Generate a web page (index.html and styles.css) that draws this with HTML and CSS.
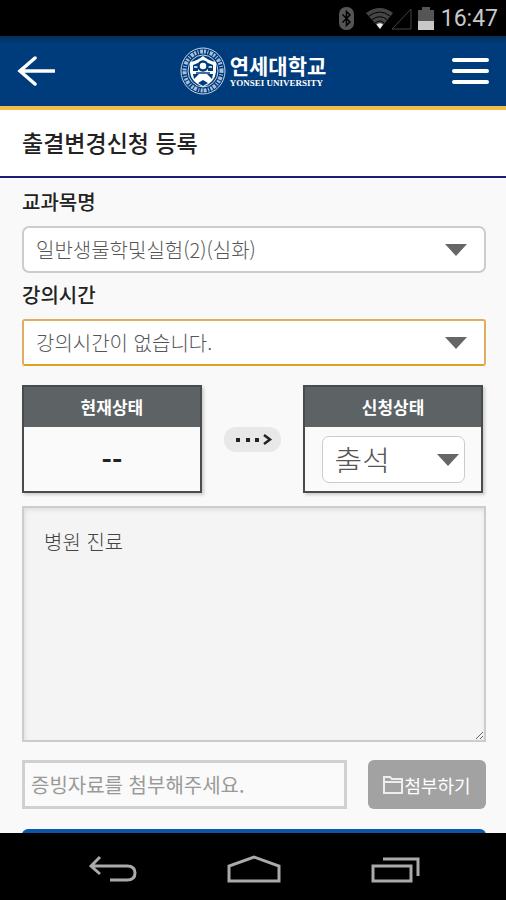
FILE: index.html
```html
<!DOCTYPE html>
<html lang="ko">
<head>
    <meta charset="UTF-8">
    <meta name="viewport" content="width=device-width, initial-scale=1">
    <title>출결변경신청 등록</title>
    <link rel="stylesheet" href="styles.css">
</head>
<body>
<div class="phone">
    <div class="status-bar">
        <svg class="status-icons" width="96" height="24" viewBox="0 0 96 24">
            <rect x="0" y="0" width="15" height="23" rx="7" fill="#555"/>
            <path d="M3.500 7.500L11 15L7.500 18.500V4.500L11 8L3.500 15.500" fill="none" stroke="#000" stroke-width="1.500"/>
            <path d="M27 6Q41-4 54 6L41 22Z" fill="#454545"/>
            <path d="M30 9Q41 1 51 9M33 12.500Q41 7 48 12.500M36 16Q41 12 45 16" fill="none" stroke="#000" stroke-width="1"/>
            <path d="M37.500 17.500Q41 15 44 17.500L41 22Z" fill="#eee"/>
            <path d="M72 2V22H53Z" fill="none" stroke="#444" stroke-width="1"/>
            <path d="M79 3H83V0H91V3H95V14H79Z" fill="#555"/>
            <path d="M79 14H95V23H79Z" fill="#c8c8c8"/>
        </svg>
        <span class="clock">16:47</span>
    </div>

    <header class="header">
        <button class="icon-btn" type="button" aria-label="뒤로">
            <svg width="38" height="30" viewBox="0 0 38 30" fill="none" stroke="#fff" stroke-width="3.500" stroke-linecap="round">
                <path d="M3 15H37M18 2L3 15L18 28"/>
            </svg>
        </button>
        <a class="logo" href="#">
            <svg width="46" height="48" viewBox="0 0 46 48">
                <ellipse cx="23" cy="24" rx="22" ry="23" fill="none" stroke="#c5d5e8" stroke-width="1"/>
                <ellipse cx="23" cy="24" rx="18.500" ry="19.500" fill="none" stroke="#a9c0dc" stroke-width="4" stroke-dasharray="2 1.500 1 1.500 3 1"/>
                <ellipse cx="23" cy="24" rx="15" ry="16" fill="#003c7c" stroke="#c5d5e8" stroke-width="1"/>
                <path d="M10 15Q17 14 23 9Q29 14 36 15V25Q35 35 23 40Q11 35 10 25Z" fill="#fff"/>
                <path d="M13 18L18 16V24H13ZM33 18L28 16V24H33ZM13 27H19L14 32ZM33 27H27L32 32ZM23 33L28 36L23 39L18 36Z" fill="#003c7c"/>
                <path d="M14 20H18M28 20H32" stroke="#fff" stroke-width="1.500"/>
                <circle cx="23" cy="19" r="4.500" fill="#fff" stroke="#003c7c" stroke-width="2.500"/>
                <path d="M16 26H30" stroke="#003c7c" stroke-width="1.500"/>
            </svg>
            <span class="logo-text">
                <strong class="logo-ko">연세대학교</strong>
                <span class="logo-en">YONSEI UNIVERSITY</span>
            </span>
        </a>
        <button class="icon-btn" type="button" aria-label="메뉴">
            <svg width="38" height="30" viewBox="0 0 38 30" stroke="#fff" stroke-width="4" stroke-linecap="round">
                <path d="M3 4H36M3 15H36M3 26H36"/>
            </svg>
        </button>
    </header>

    <h1 class="page-title">출결변경신청 등록</h1>

    <main class="content">
        <form class="form">
            <label class="label" for="subject">교과목명</label>
            <div class="select-box">
                <select class="select" id="subject">
                    <option>일반생물학및실험(2)(심화)</option>
                </select>
                <svg class="arrow" width="22" height="12" viewBox="0 0 22 12"><path d="M0 0H22L11 12Z" fill="#666"/></svg>
            </div>

            <label class="label" for="time">강의시간</label>
            <div class="select-box">
                <select class="select active" id="time">
                    <option>강의시간이 없습니다.</option>
                </select>
                <svg class="arrow" width="22" height="12" viewBox="0 0 22 12"><path d="M0 0H22L11 12Z" fill="#666"/></svg>
            </div>

            <div class="state">
                <section class="card">
                    <h2 class="card-title">현재상태</h2>
                    <div class="card-body"><strong class="current">--</strong></div>
                </section>
                <svg class="state-arrow" width="57" height="25" viewBox="0 0 57 25">
                    <rect width="57" height="25" rx="12" fill="#e8e8e8"/>
                    <path d="M12 11H16V15H12ZM22 11H26V15H22ZM31 11H35V15H31Z" fill="#222"/>
                    <path d="M40 8L46 12.500L40 17" fill="none" stroke="#222" stroke-width="2.500"/>
                </svg>
                <section class="card">
                    <h2 class="card-title"><label for="request">신청상태</label></h2>
                    <div class="card-body">
                        <div class="select-box small">
                            <select class="select" id="request">
                                <option>출석</option>
                            </select>
                            <svg class="arrow" width="22" height="12" viewBox="0 0 22 12"><path d="M0 0H22L11 12Z" fill="#666"/></svg>
                        </div>
                    </div>
                </section>
            </div>

            <textarea class="reason" aria-label="사유">병원 진료</textarea>

            <div class="attach">
                <input class="file-name" type="text" placeholder="증빙자료를 첨부해주세요." aria-label="증빙자료">
                <button class="file-btn" type="button">
                    <svg width="20" height="18" viewBox="0 0 20 18" fill="none" stroke="#eee" stroke-width="2">
                        <path d="M1 17V1H7L9 3H19V17ZM1 6H19"/>
                    </svg>
                    <span>첨부하기</span>
                </button>
            </div>

            <button class="submit" type="submit" aria-label="등록"></button>
        </form>
    </main>

    <nav class="nav-bar">
        <button class="icon-btn" type="button" aria-label="이전">
            <svg width="48" height="28" viewBox="0 0 48 28" fill="none" stroke="#aaa" stroke-width="3">
                <path d="M2 11H38Q46 11 46 18Q46 25 38 25H21M11 2L2 11L11 19"/>
            </svg>
        </button>
        <button class="icon-btn" type="button" aria-label="홈">
            <svg width="54" height="28" viewBox="0 0 54 28" fill="none" stroke="#aaa" stroke-width="3">
                <path d="M2 26V11L27 2L52 11V26Z"/>
            </svg>
        </button>
        <button class="icon-btn" type="button" aria-label="최근 앱">
            <svg width="50" height="28" viewBox="0 0 50 28" fill="none" stroke="#aaa" stroke-width="3">
                <path d="M2 11H40V26H2ZM12 4H47V21"/>
            </svg>
        </button>
    </nav>
</div>
</body>
</html>
```
FILE: styles.css
```css
*{box-sizing:border-box;}
body,h1,h2{margin:0;padding:0;}
body{background:#000;color:#222;font:400 20px/28px "Noto Sans CJK KR",sans-serif;}
button,input,select,textarea{margin:0;font:inherit;outline:none;}
svg{display:block;flex:none;}
.phone{display:flex;flex-direction:column;height:100vh;}

/* status bar */
.status-bar{display:flex;flex:none;align-items:center;justify-content:flex-end;gap:6px;height:36px;padding:2px 8px 0;background:#000;}
.clock{color:#c8c8c8;font:400 23px/34px Roboto,sans-serif;}

/* header */
.header{display:flex;flex:none;align-items:center;justify-content:space-between;height:74px;padding:0 17px;background:linear-gradient(#08305c,#003c7c 8px);border-bottom:4px solid #f3bd4b;}
.icon-btn{padding:0;background:none;border:0;}
.logo{display:flex;align-items:center;gap:4px;color:#fff;text-decoration:none;}
.logo-text{display:flex;flex-direction:column;}
.logo-ko{font-size:21px;line-height:24px;font-weight:700;}
.logo-en{font:700 9px/12px "Liberation Serif",serif;white-space:nowrap;}
.page-title{flex:none;height:68px;padding:0 22px;background:#fff;border-bottom:2px solid #1c1c78;font-size:23px;line-height:64px;font-weight:500;}

/* form */
.content{flex:1;min-height:0;overflow:hidden;background:#f9f9f9;}
.form{display:flex;flex-direction:column;padding:10px 20px 0 22px;}
.label{margin-bottom:10px;font-weight:500;}
.select-box{position:relative;margin-bottom:8px;}
.select{display:block;width:100%;height:47px;padding:0 40px 0 12px;background:#fff;border:2px solid #ccc;border-radius:7px;color:#555;font-weight:300;appearance:none;}
.select.active{border-color:#e0ae60;border-bottom-color:#e0a020;border-radius:3px;}
.arrow{position:absolute;top:18px;right:19px;pointer-events:none;}
.state{display:flex;align-items:center;justify-content:space-between;margin:11px 3px 13px 0;}
.card{width:39%;border:2px solid #484c4f;box-shadow:2px 2px 3px #ccc;}
.card-title{background:#5d6265;color:#fff;font-size:17px;line-height:40px;font-weight:700;text-align:center;}
.card-body{display:flex;align-items:center;justify-content:center;height:64px;background:#fafafa;}
.current{font-size:28px;}
.small{width:143px;margin:0;}
.small .select{padding:0 30px 0 12px;border-width:1px;font-size:30px;}
.small .arrow{right:6px;}
.reason{display:block;width:100%;height:236px;padding:20px;background:#f4f4f4;border:2px solid #ccc;box-shadow:inset 1px 2px 4px #ddd;color:#444;font-weight:300;}
.attach{display:flex;gap:21px;margin:18px 0 20px;}
.file-name{flex:1;min-width:0;height:49px;padding:0 6px;background:#fafafa;border:3px solid #d0d0d0;}
.file-name::placeholder{color:#999;}
.file-btn{display:flex;align-items:center;justify-content:center;gap:1px;width:118px;height:49px;padding:0;background:#a2a2a2;border:0;border-radius:6px;color:#fff;font-size:18px;}
.submit{height:50px;background:#0b58a8;border:0;border-radius:6px;}

/* android buttons */
.nav-bar{display:flex;flex:none;align-items:center;justify-content:space-between;height:67px;padding:4px 85px 0 89px;background:#000;}
```
